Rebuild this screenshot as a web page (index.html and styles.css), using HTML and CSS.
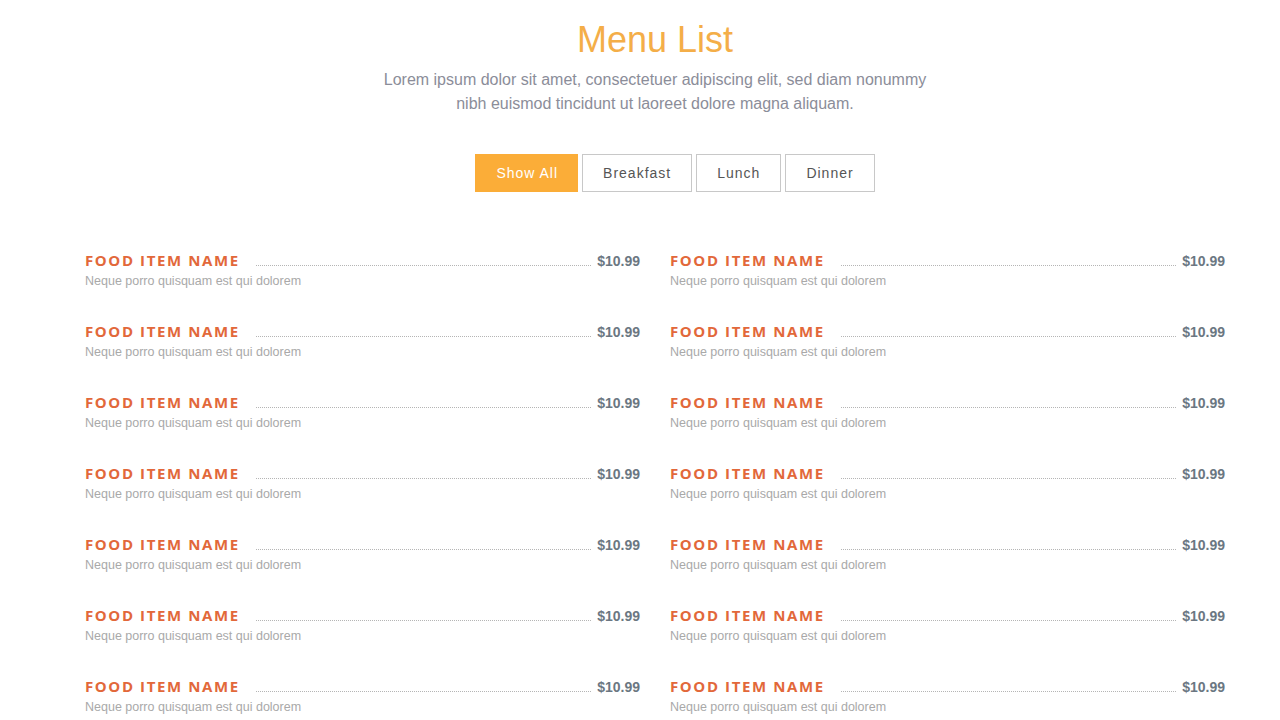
FILE: index.html
```html
<!DOCTYPE html>
<html>
<head>
<meta charset="utf-8">
<link rel="stylesheet" href="styles.css">
</head>
<body>
<div class="page">
  <header class="head">
    <h1 class="title">Menu List</h1>
    <p class="lead">Lorem ipsum dolor sit amet, consectetuer adipiscing elit, sed diam nonummy<br>nibh euismod tincidunt ut laoreet dolore magna aliquam.</p>
  </header>
  <nav class="filters">
    <button class="btn active">Show All</button>
    <button class="btn">Breakfast</button>
    <button class="btn">Lunch</button>
    <button class="btn">Dinner</button>
  </nav>
  <section class="menu">
    <div class="item"><div class="line"><span class="name">FOOD ITEM NAME</span><span class="dots"></span><span class="price">$10.99</span></div><p class="desc">Neque porro quisquam est qui dolorem</p></div>
    <div class="item"><div class="line"><span class="name">FOOD ITEM NAME</span><span class="dots"></span><span class="price">$10.99</span></div><p class="desc">Neque porro quisquam est qui dolorem</p></div>
    <div class="item"><div class="line"><span class="name">FOOD ITEM NAME</span><span class="dots"></span><span class="price">$10.99</span></div><p class="desc">Neque porro quisquam est qui dolorem</p></div>
    <div class="item"><div class="line"><span class="name">FOOD ITEM NAME</span><span class="dots"></span><span class="price">$10.99</span></div><p class="desc">Neque porro quisquam est qui dolorem</p></div>
    <div class="item"><div class="line"><span class="name">FOOD ITEM NAME</span><span class="dots"></span><span class="price">$10.99</span></div><p class="desc">Neque porro quisquam est qui dolorem</p></div>
    <div class="item"><div class="line"><span class="name">FOOD ITEM NAME</span><span class="dots"></span><span class="price">$10.99</span></div><p class="desc">Neque porro quisquam est qui dolorem</p></div>
    <div class="item"><div class="line"><span class="name">FOOD ITEM NAME</span><span class="dots"></span><span class="price">$10.99</span></div><p class="desc">Neque porro quisquam est qui dolorem</p></div>
    <div class="item"><div class="line"><span class="name">FOOD ITEM NAME</span><span class="dots"></span><span class="price">$10.99</span></div><p class="desc">Neque porro quisquam est qui dolorem</p></div>
    <div class="item"><div class="line"><span class="name">FOOD ITEM NAME</span><span class="dots"></span><span class="price">$10.99</span></div><p class="desc">Neque porro quisquam est qui dolorem</p></div>
    <div class="item"><div class="line"><span class="name">FOOD ITEM NAME</span><span class="dots"></span><span class="price">$10.99</span></div><p class="desc">Neque porro quisquam est qui dolorem</p></div>
    <div class="item"><div class="line"><span class="name">FOOD ITEM NAME</span><span class="dots"></span><span class="price">$10.99</span></div><p class="desc">Neque porro quisquam est qui dolorem</p></div>
    <div class="item"><div class="line"><span class="name">FOOD ITEM NAME</span><span class="dots"></span><span class="price">$10.99</span></div><p class="desc">Neque porro quisquam est qui dolorem</p></div>
    <div class="item"><div class="line"><span class="name">FOOD ITEM NAME</span><span class="dots"></span><span class="price">$10.99</span></div><p class="desc">Neque porro quisquam est qui dolorem</p></div>
    <div class="item"><div class="line"><span class="name">FOOD ITEM NAME</span><span class="dots"></span><span class="price">$10.99</span></div><p class="desc">Neque porro quisquam est qui dolorem</p></div>
  </section>
</div>
</body>
</html>
```

FILE: styles.css
```css
html, body {
  margin: 0;
  padding: 0;
  background: #ffffff;
}
body {
  font-family: "Liberation Sans", Arial, sans-serif;
  overflow: hidden;
}
.page {
  width: 1170px;
  margin-left: 70px;
  padding-top: 19px;
}
.head {
  text-align: center;
}
.title {
  margin: 0;
  font-size: 36px;
  line-height: 42px;
  font-weight: normal;
  color: #f4ae48;
}
.lead {
  margin: 7px 0 0;
  font-size: 16px;
  line-height: 24px;
  color: #8b8d99;
}
.filters {
  display: flex;
  justify-content: center;
  gap: 4px;
  margin-top: 38px;
  padding-left: 40px;
}
.btn {
  font-family: "Liberation Sans", Arial, sans-serif;
  font-size: 14px;
  letter-spacing: 1px;
  height: 38px;
  padding: 0 20px;
  background: #ffffff;
  border: 1px solid #c8c8c8;
  color: #555555;
  cursor: pointer;
}
.btn.active {
  background: #fbad38;
  border-color: #fbad38;
  color: #ffffff;
  padding: 0 19px 0 20px;
}
.menu {
  display: grid;
  grid-template-columns: 555px 555px;
  column-gap: 30px;
  row-gap: 0;
  padding: 0 15px;
  margin-top: 60px;
}
.item {
  height: 71px;
}
.line {
  display: flex;
  align-items: flex-end;
  height: 16px;
}
.name {
  font-family: "Open Sans", "Liberation Sans", sans-serif;
  font-weight: 700;
  font-size: 15px;
  line-height: 16px;
  letter-spacing: 1.6px;
  color: #e2683a;
}
.dots {
  flex: 1;
  border-bottom: 1px dotted #b5b5b5;
  margin: 0 6px 2px 16px;
}
.price {
  font-weight: 700;
  font-size: 14px;
  line-height: 16px;
  margin-bottom: -1px;
  color: #6b7782;
}
.desc {
  margin: 6px 0 0;
  font-size: 12.5px;
  line-height: 14px;
  color: #a9a9a9;
}
```
